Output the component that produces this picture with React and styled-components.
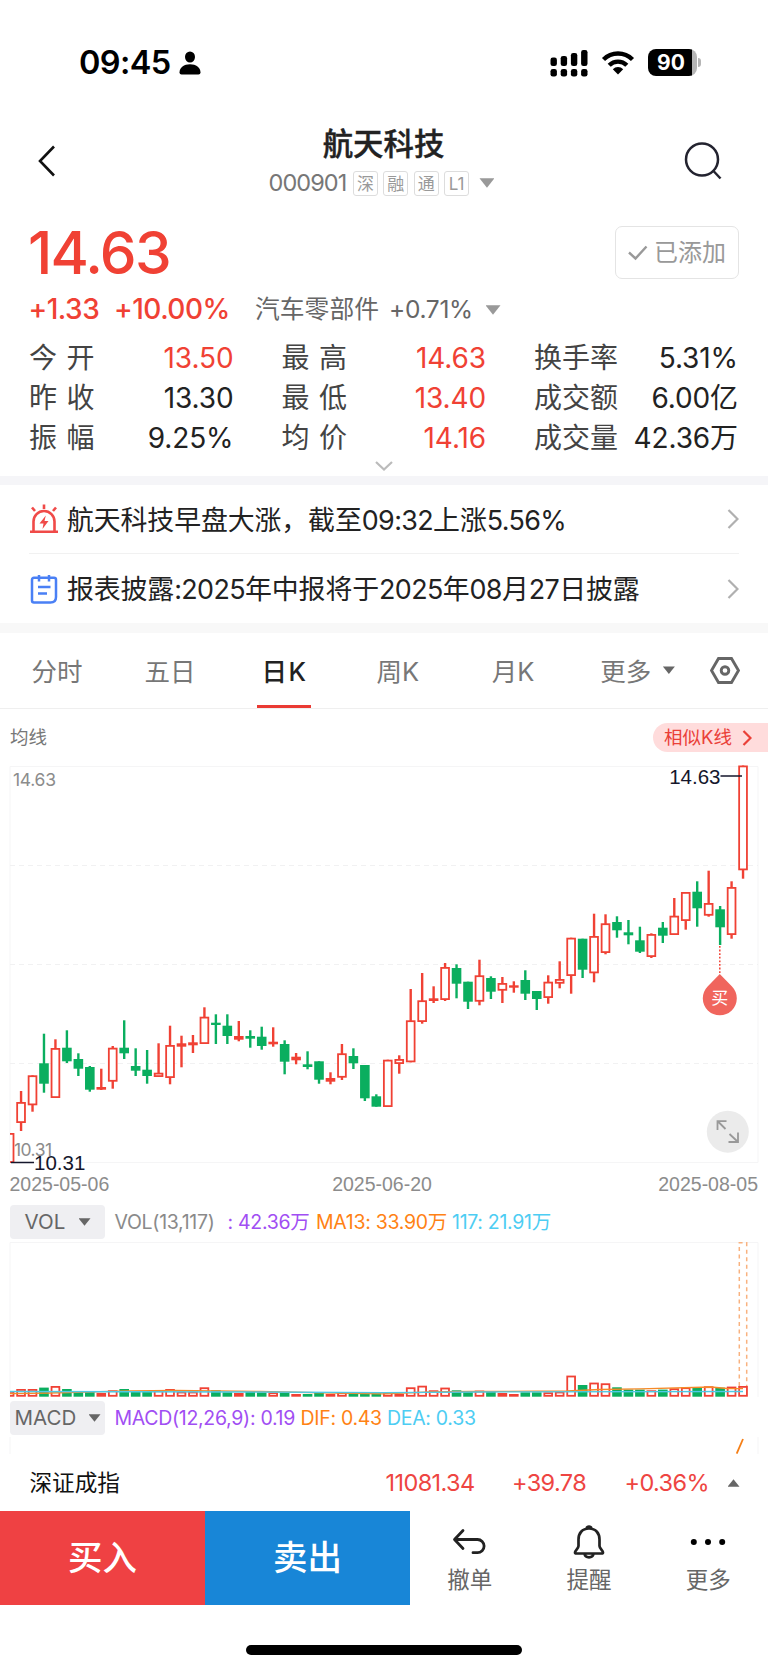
import React, { useState } from 'react'
import styled, { createGlobalStyle } from "styled-components";

const RED = "#f04134";
const GREEN = "#0aae5f";
const STEP = 11.46;
const FIRST = 9.6;

// [up, high, bodyTop, bodyBottom, low, volumeTop]
const candles = [
    [1, 1133, 1133, 1163, 1163, 1391], [1, 1091, 1102, 1123, 1131, 1389], [1, 1075.3, 1075.3, 1105.3, 1111.7, 1389],
    [0, 1033.7, 1063.3, 1083.7, 1092.7, 1387.6], [1, 1039.3, 1048, 1098, 1098, 1386], [0, 1030.3, 1047.7, 1061.3, 1063, 1389],
    [0, 1053.3, 1059, 1068.7, 1076, 1392], [0, 1066, 1067, 1089.7, 1091.7, 1392], [1, 1068.7, 1087, 1089.7, 1090, 1393],
    [1, 1046, 1047.7, 1081.7, 1088.7, 1390.3], [0, 1020.3, 1047.7, 1053.3, 1059, 1389], [0, 1048.3, 1066, 1070.7, 1076, 1391.6],
    [0, 1050, 1069.7, 1076, 1083.7, 1391], [1, 1043.3, 1072.7, 1077, 1077, 1390.3], [1, 1025.7, 1045, 1078, 1084.3, 1389],
    [1, 1035.7, 1043.3, 1046.7, 1067.3, 1391.6], [1, 1035, 1042.3, 1045.3, 1053, 1391.6], [1, 1007.3, 1016.7, 1044, 1044, 1387.3],
    [0, 1014.3, 1022.7, 1025, 1044, 1390.3], [0, 1014.3, 1025.7, 1036, 1044, 1392.3], [1, 1021, 1036, 1039.7, 1041.3, 1393],
    [0, 1030.3, 1036, 1038.7, 1047.7, 1392], [0, 1026.7, 1036.7, 1046, 1049.7, 1392.3], [1, 1027.3, 1041.7, 1044.3, 1046.7, 1392.3],
    [0, 1040.3, 1044, 1061.7, 1074.3, 1392.3], [1, 1053, 1056.7, 1060.3, 1064.3, 1394], [0, 1051.3, 1064.3, 1067, 1069.3, 1394],
    [0, 1061.3, 1061.3, 1079.7, 1083.7, 1393], [1, 1072.3, 1078, 1081.7, 1084.3, 1394], [1, 1044, 1053.3, 1077.7, 1080, 1392.3],
    [0, 1048.3, 1056, 1063.3, 1069, 1394], [0, 1065, 1065, 1098.3, 1101, 1393.3], [0, 1094.3, 1096.3, 1106.7, 1106.7, 1393.3],
    [1, 1059.7, 1059.7, 1107, 1107, 1392.3], [1, 1055.3, 1059, 1064, 1073.7, 1394], [1, 989, 1020.3, 1062.3, 1062.3, 1387.3],
    [1, 973, 1000.3, 1022, 1023.7, 1385.7], [1, 986.3, 998.3, 1001, 1003, 1390.3], [1, 963, 967, 1000, 1001, 1387.6],
    [0, 964.3, 968, 983.7, 998.3, 1390.3], [0, 981.7, 981.7, 1001.7, 1009, 1391.6], [1, 959.7, 975.3, 1001.7, 1005.3, 1390.6],
    [0, 976.3, 978, 991.7, 999, 1391.6], [1, 977, 983, 990.7, 1003, 1393], [1, 981.3, 985.3, 987.7, 992.7, 1394],
    [0, 970.3, 980, 993.7, 1000, 1392.3], [0, 991, 991, 999, 1010, 1392.3], [1, 975.3, 981.7, 998, 1003.7, 1392.3],
    [1, 961.3, 979, 983.7, 988.3, 1391.6], [1, 937.7, 937.7, 976, 993.7, 1375.6], [0, 938.7, 938.7, 969.7, 978, 1385],
    [1, 913.7, 936, 973.3, 982.3, 1382.6], [1, 914.3, 923.3, 953, 954.3, 1383.3], [0, 916.3, 922, 930.3, 937.7, 1387.3],
    [0, 920, 932.3, 935.3, 944.3, 1389.6], [0, 926.7, 940.3, 951.7, 953, 1389.6], [1, 933.3, 934, 957, 958, 1390.3],
    [0, 922, 927.7, 935.7, 943, 1389.6], [1, 898, 915.7, 935, 935, 1388.3], [1, 892, 892, 921, 929.7, 1387.3],
    [0, 881.3, 891.7, 908.3, 926.7, 1387.6], [1, 870.7, 903, 915.7, 916.7, 1386.3], [0, 906, 909.3, 927.3, 945, 1387.6],
    [1, 881.3, 887, 935, 938.7, 1386.6], [1, 765.5, 765.5, 870.3, 878.7, 1386],
];

const stats = [
    { id: 1, name: "今 开", value: "13.50", red: true },
    { id: 2, name: "最 高", value: "14.63", red: true },
    { id: 3, name: "换手率", value: "5.31%" },
    { id: 4, name: "昨 收", value: "13.30" },
    { id: 5, name: "最 低", value: "13.40", red: true },
    { id: 6, name: "成交额", value: "6.00亿" },
    { id: 7, name: "振 幅", value: "9.25%" },
    { id: 8, name: "均 价", value: "14.16", red: true },
    { id: 9, name: "成交量", value: "42.36万" },
]

const tabs = [
    { id: 1, name: "分时", left: 31.5 },
    { id: 2, name: "五日", left: 62 },
    { id: 3, name: "日K", left: 66 },
    { id: 4, name: "周K", left: 69 },
    { id: 5, name: "月K", left: 72.5 },
]

const Body = ({ x, up, top, bottom }) => {
    const h = bottom - top
    if (!up || h < 4) {
        return <rect x={x - 4.8} y={top} width="9.6" height={Math.max(h, 2)} fill={up ? RED : GREEN} />
    }
    return <rect x={x - 3.9} y={top + 0.9} width="7.8" height={h - 1.8} fill="#fff" stroke={RED} strokeWidth="1.8" />
}

const KLine = () => (
    <svg width="768" height="442" viewBox="0 760 768 442">
        <g stroke="#f5f5f6" strokeWidth="1" fill="none">
            <path d="M10 1162.5V766.5H758V1162.5Z" />
            <path d="M10 865.5H758M10 964.5H758M10 1063.5H758" stroke="#f1f1f2" strokeDasharray="5 4" />
        </g>
        <clipPath id="plot"><rect x="10" y="760" width="750" height="410" /></clipPath>
        <g clipPath="url(#plot)">
            {candles.map(([up, high, top, bottom, low], i) => {
                const x = FIRST + i * STEP
                return (
                    <g key={i}>
                        <path d={`M${x} ${high}V${low}`} stroke={up ? RED : GREEN} strokeWidth="2.4" />
                        <Body x={x} up={up} top={top} bottom={bottom} />
                    </g>
                )
            })}
        </g>
        <path d="M11 1162.5H34M720.5 776H742" stroke="#15172c" strokeWidth="1.6" />
        <ChartText x="13" y="786" $ui textLength="43">14.63</ChartText>
        <ChartText x="14" y="1155.5" $ui textLength="38">10.31</ChartText>
        <ChartText x="34" y="1170" $dark>10.31</ChartText>
        <ChartText x="720.5" y="783.5" $dark textAnchor="end">14.63</ChartText>
        <ChartText x="9.5" y="1191">2025-05-06</ChartText>
        <ChartText x="382" y="1191" textAnchor="middle">2025-06-20</ChartText>
        <ChartText x="758" y="1191" textAnchor="end">2025-08-05</ChartText>
        <path d="M719.8 946V974" stroke={RED} strokeWidth="1.5" strokeDasharray="1.8 1.8" />
        <path d="M719.8 974L732 986.5A17 17 0 1 1 707.6 986.5Z" fill="#f0655d" />
        <text x="719.8" y="1004" fontSize="17" fill="#fff" textAnchor="middle">买</text>
        <circle cx="727.8" cy="1131.7" r="21" fill="#ebebeb" />
        <path d="M725.5 1129L717.5 1121M717.5 1130V1121.2H726.5M729.5 1134L738 1142M738 1132.5V1142H728.5" stroke="#999" strokeWidth="1.8" fill="none" />
    </svg>
)

const Volume = () => (
    <svg width="768" height="162" viewBox="0 1239 768 162">
        <path d="M10 1397V1242.5H758V1397" stroke="#f5f5f6" fill="none" />
        <clipPath id="vol"><rect x="10" y="1239" width="750" height="162" /></clipPath>
        <g clipPath="url(#vol)">
            {candles.map((c, i) => (
                <Body key={i} x={FIRST + i * STEP} up={c[0]} top={c[5]} bottom={1396.7} />
            ))}
        </g>
        <path d="M10 1393.7L50 1393L130 1390.8L175 1390.5L260 1391.5L350 1393.4L384 1393.8L430 1392L470 1391.5L567 1391L600 1389.5L640 1388.8L711 1387L727 1388.5L743 1388.7" stroke="#f58a28" strokeWidth="1.3" fill="none" />
        <path d="M10 1391.5L250 1392L384 1392.6L480 1392L743 1391.5" stroke="#4fc9e6" strokeWidth="1.3" fill="none" />
        <path d="M739.3 1386V1242.8H746.7V1386" stroke="#f9b27f" strokeWidth="1.5" strokeDasharray="4 3.5" fill="none" />
    </svg>
)

const App = () => {
    const [active, setActive] = useState(3);

    return (
        <Page>
            <Global />
            <StatusBar>
                <Time>09:45</Time>
                <svg width="22" height="24" viewBox="0 0 22 24">
                    <ellipse cx="11" cy="6" rx="5" ry="5.6" />
                    <path d="M.5 21.5C.5 16.5 5 13.3 11 13.3S21.5 16.5 21.5 21.5Q21.5 23.6 19.5 23.6H2.5Q.5 23.6 .5 21.5Z" />
                </svg>
                <Signals>
                    <svg width="38" height="28" viewBox="0 0 38 28">
                        {[0, 1, 2, 3].map((i) => (
                            <g key={i}>
                                <rect x={0.5 + i * 10.2} y={[8.5, 7, 4, 1][i]} width="6.4" height={[8.5, 10, 13, 16][i]} rx="2.3" />
                                <rect x={0.5 + i * 10.2} y="20" width="6.4" height="7.5" rx="2.3" />
                            </g>
                        ))}
                    </svg>
                    <svg width="34" height="25" viewBox="0 0 34 25">
                        <g fill="none" stroke="#000" strokeWidth="4.4">
                            <path d="M2.5 9.5A20.5 20.5 0 0 1 31.5 9.5" />
                            <path d="M8.2 15.2A12.5 12.5 0 0 1 25.8 15.2" />
                        </g>
                        <path d="M17 24.5L11.8 19.2A7.4 7.4 0 0 1 22.2 19.2Z" />
                    </svg>
                    <Battery><b>90</b></Battery>
                </Signals>
            </StatusBar>

            <Header>
                <svg width="20" height="32" viewBox="0 0 20 32" fill="none" stroke="#111" strokeWidth="2.6">
                    <path d="M17 1.5L3 16L17 30.5" />
                </svg>
                <Title>
                    <h1>航天科技</h1>
                    <Code>
                        <span>000901</span>
                        {["深", "融", "通", "L1"].map((t) => <Badge key={t}>{t}</Badge>)}
                        <Caret $size={15} />
                    </Code>
                </Title>
                <svg width="38" height="38" viewBox="0 0 38 38" fill="none" stroke="#23232f" strokeWidth="2.5">
                    <circle cx="18" cy="17.5" r="16" />
                    <path d="M29 28.5L36.5 36.5" />
                </svg>
            </Header>

            <Quote>
                <Price>14.63</Price>
                <Added>
                    <svg width="20" height="16" viewBox="0 0 20 16" fill="none" stroke="#999" strokeWidth="2.4">
                        <path d="M1 7.5L7.5 13.5L18.5 1.5" />
                    </svg>
                    <span>已添加</span>
                </Added>
            </Quote>
            <Change>
                <Diff $w={85.5}>+1.33</Diff>
                <Diff $w={141}>+10.00%</Diff>
                <Sector>汽车零部件</Sector>
                <SectorRate>+0.71%</SectorRate>
                <Caret $size={15} />
            </Change>
            <Stats>
                {
                    stats.map((item) => (
                        <Stat key={item.id} $red={item.red}>
                            <span>{item.name}</span>
                            <em>{item.value}</em>
                        </Stat>
                    ))
                }
            </Stats>
            <Expand>
                <svg width="18" height="10" viewBox="0 0 18 10" fill="none" stroke="#bbb" strokeWidth="2.2"><path d="M1 1L9 8.5L17 1" /></svg>
            </Expand>

            <Band $h={9} />
            <News $line>
                <svg width="30" height="30" viewBox="0 0 30 30" fill="none" stroke="#f04a48" strokeWidth="2.6">
                    <path d="M1 27.8H29M4.5 27V17.5A10.5 10.5 0 0 1 25.5 17.5V27M15 .5V5M3 3.5L6 7M27 3.5L24 7" />
                    <path d="M16.8 11.5L10.5 19.5H14.5L13.5 25L19.5 17H15.5Z" fill="#f04a48" stroke="none" />
                </svg>
                <p>航天科技早盘大涨，截至<Num>09:32</Num>上涨<Num>5.56%</Num></p>
                <Arrow />
            </News>
            <News>
                <svg width="30" height="30" viewBox="0 0 30 30" fill="none" stroke="#4a80f5" strokeWidth="2.5">
                    <path d="M5 3.8H25Q27 3.8 27 5.8V23Q27 28.5 21.5 28.5H5Q3 28.5 3 26.5V5.8Q3 3.8 5 3.8ZM10 1V7.5M20 1V7.5M9 13H21.5M9 19.5H18" />
                </svg>
                <p>报表披露<Num>:2025</Num>年中报将于<Num>2025</Num>年<Num>08</Num>月<Num>27</Num>日披露</p>
                <Arrow />
            </News>
            <Band $h={9.5} $soft />

            <Tabs>
                {
                    tabs.map((item) => (
                        <Tab key={item.id} $left={item.left} $on={item.id === active} onClick={() => setActive(item.id)}>
                            {item.name}
                        </Tab>
                    ))
                }
                <Tab $left={66}>更多</Tab>
                <Caret $size={12} $dark />
                <svg width="30" height="27" viewBox="0 0 30 27" fill="none" stroke="#666" strokeWidth="2.9">
                    <path d="M8.5 1.5H21.5L28.5 13.5L21.5 25.5H8.5L1.5 13.5Z" />
                    <circle cx="15" cy="13.5" r="3.8" />
                </svg>
            </Tabs>

            <ChartHead>
                <span>均线</span>
                <Similar>
                    相似K线
                    <svg width="10" height="16" viewBox="0 0 10 16" fill="none" stroke="#ea4038" strokeWidth="2.2"><path d="M1.5 1L8.5 8L1.5 15" /></svg>
                </Similar>
            </ChartHead>
            <KLine />

            <Indicator $top={2.5}>
                <Picker $pad={14.5}>VOL<Caret $size={12} $dark /></Picker>
                <Legend $w={113} $c="#8a8a8a">VOL(13,117)</Legend>
                <Legend $w={88.5} $c="#a14ef3">: 42.36万</Legend>
                <Legend $w={136} $c="#ff8214">MA13: 33.90万</Legend>
                <Legend $c="#4dcdf3">117: 21.91万</Legend>
            </Indicator>
            <Volume />
            <Indicator>
                <Picker $pad={4.5}>MACD<Caret $size={12} $dark /></Picker>
                <Legend $w={186} $c="#a14ef3">MACD(12,26,9): 0.19</Legend>
                <Legend $w={86.5} $c="#ff8214">DIF: 0.43</Legend>
                <Legend $c="#4dcdf3">DEA: 0.33</Legend>
            </Indicator>
            <svg width="768" height="20" viewBox="0 1435 768 20">
                <path d="M10 1437V1454M758 1437V1454" stroke="#f5f5f6" />
                <path d="M736.7 1453.7L743 1439" stroke="#f57f17" strokeWidth="1.8" />
            </svg>

            <IndexRow>
                <span>深证成指</span>
                <IndexNum $w={126.5}>11081.34</IndexNum>
                <IndexNum $w={112.5}>+39.78</IndexNum>
                <IndexNum $w={103}>+0.36%</IndexNum>
                <Caret $size={12} $dark $up />
            </IndexRow>

            <Actions>
                <Trade $c="#ef4143">买入</Trade>
                <Trade $c="#1886d7">卖出</Trade>
                <Tool>
                    <svg width="36" height="36" viewBox="0 0 36 36" fill="none" stroke="#222" strokeWidth="2.8" strokeLinecap="round" strokeLinejoin="round">
                        <path d="M11 6.5L2.5 15.5L11 24.5M3.5 15.5H25.5A6.6 6.6 0 0 1 25.5 28.7H21" />
                    </svg>
                    撤单
                </Tool>
                <Tool>
                    <svg width="36" height="36" viewBox="0 0 36 36" fill="none" stroke="#222" strokeWidth="2.7" strokeLinejoin="round">
                        <path d="M18 4.5C11 4.5 7.5 9.5 7.5 15.5V22C7.5 24.5 4 26.5 4 28.5Q4 29.5 5.5 29.5H30.5Q32 29.5 32 28.5C32 26.5 28.5 24.5 28.5 22V15.5C28.5 9.5 25 4.5 18 4.5ZM15.5 4.5A2.6 2.6 0 0 1 20.5 4.5M13.5 30A4.6 4.2 0 0 0 22.5 30" />
                    </svg>
                    提醒
                </Tool>
                <Tool>
                    <svg width="36" height="36" viewBox="0 0 36 36">
                        <circle cx="3.8" cy="18" r="3" /><circle cx="18" cy="18" r="3" /><circle cx="32.2" cy="18" r="3" />
                    </svg>
                    更多
                </Tool>
            </Actions>
            <Home />
        </Page>
    )
}

export default App


const Arrow = () => (
    <svg width="12" height="20" viewBox="0 0 12 20" fill="none" stroke="#b0b0b0" strokeWidth="2.2"><path d="M1.5 1L10.5 10L1.5 19" /></svg>
)

const Global = createGlobalStyle`
    *{
        box-sizing: border-box;
    }
    body{
        margin: 0;
        background: #fff;
    }
    h1, p{
        margin: 0;
    }
    svg{
        display: block;
        flex: none;
    }
`

const Page = styled.div`
    width: 768px;
    height: 1670px;
    overflow: hidden;
    display: flex;
    flex-direction: column;
    background: #fff;
    color: #222;
    font-family: Inter, "Noto Sans CJK SC", sans-serif;
    line-height: 1.2;
    white-space: nowrap;
    > *{
        flex: none;
    }
`

const StatusBar = styled.div`
    height: 125px;
    padding: 0 71px 0 79px;
    display: flex;
    align-items: center;
`

const Time = styled.div`
    width: 100px;
    font-size: 32.5px;
    font-weight: 600;
    letter-spacing: -0.6px;
    color: #000;
`

const Signals = styled.div`
    margin-left: auto;
    display: flex;
    align-items: center;
    gap: 13px;
`

const Battery = styled.div`
    position: relative;
    width: 49px;
    height: 27px;
    border-radius: 8px;
    background: linear-gradient(90deg, #000 44px, #b5b5b5 44px);
    color: #fff;
    font-size: 21px;
    line-height: 27px;
    text-align: center;
    padding-right: 3px;
    &::after{
        content: "";
        position: absolute;
        right: -4px;
        top: 9px;
        width: 3px;
        height: 9px;
        border-radius: 0 3px 3px 0;
        background: #b5b5b5;
    }
`

const Header = styled.div`
    height: 90px;
    padding: 0 46px 0 37px;
    display: flex;
    justify-content: space-between;
    > svg{
        margin-top: 19.5px;
    }
    > svg:last-child{
        margin-top: 16.5px;
    }
`

const Title = styled.div`
    margin-left: 13px;
    display: flex;
    flex-direction: column;
    align-items: center;
    h1{
        height: 37px;
        line-height: 38px;
        font-size: 30.4px;
        font-weight: 500;
        -webkit-text-stroke: 0.4px #222;
        margin-left: 13px;
    }
`

const Code = styled.div`
    margin: 8px 0 0 9px;
    display: flex;
    align-items: center;
    gap: 5.4px;
    color: #777;
    font-size: 23.5px;
    line-height: 26px;
    > span{
        width: 79px;
        letter-spacing: -0.95px;
    }
`

const Badge = styled.i`
    width: 25px;
    height: 25px;
    border: 1.5px solid #ddd;
    border-radius: 3px;
    font-style: normal;
    font-size: 17px;
    line-height: 24px;
    text-align: center;
    color: #999;
    & + div{
        margin-left: 5px;
    }
`

const Caret = styled.div`
    flex: none;
    width: ${({ $size }) => $size}px;
    height: ${({ $size }) => $size * 0.64}px;
    background: ${({ $dark }) => ($dark ? "#666" : "#999")};
    clip-path: ${({ $up }) => ($up ? "polygon(50% 0, 100% 100%, 0 100%)" : "polygon(0 0, 100% 0, 50% 100%)")};
`

const Quote = styled.div`
    height: 75px;
    padding: 11px 29px 0 28px;
    display: flex;
    justify-content: space-between;
    align-items: flex-start;
`

const Price = styled.div`
    font-size: 58.5px;
    line-height: 54px;
    font-weight: 500;
    letter-spacing: -1.7px;
    color: ${RED};
`

const Added = styled.div`
    width: 124px;
    height: 53px;
    border: 1.5px solid #e4e4e4;
    border-radius: 7px;
    display: flex;
    align-items: center;
    justify-content: center;
    gap: 6px;
    font-size: 24px;
    color: #999;
    span{
        padding-top: 2px;
    }
`

const Change = styled.div`
    height: 39px;
    padding: 1px 0 0 28.5px;
    display: flex;
    align-items: center;
`

const Diff = styled.div`
    width: ${({ $w }) => $w}px;
    font-size: 28px;
    font-weight: 500;
    letter-spacing: -0.5px;
    color: ${RED};
`

const Sector = styled.div`
    width: 134px;
    font-size: 24.8px;
    color: #666;
`

const SectorRate = styled.div`
    width: 96.5px;
    font-size: 24.5px;
    letter-spacing: -0.3px;
    color: #666;
`

const Stats = styled.div`
    height: 120px;
    margin-top: 9px;
    padding: 0 30px 0 29px;
    display: grid;
    grid-template-columns: 204.5px 204.5px 204px;
    grid-template-rows: repeat(3, 40px);
    column-gap: 48px;
`

const Stat = styled.div`
    display: flex;
    align-items: center;
    justify-content: space-between;
    font-size: 28px;
    line-height: 40px;
    span{
        color: #444;
        word-spacing: 1.5px;
    }
    em{
        font-style: normal;
        letter-spacing: -0.1px;
        color: ${({ $red }) => ($red ? RED : "#222")};
    }
`

const Expand = styled.div`
    height: 18px;
    padding-top: 3px;
    display: flex;
    justify-content: center;
`

const Band = styled.div`
    height: ${({ $h }) => $h}px;
    background: ${({ $soft }) => ($soft ? "#f8f8f8" : "#f5f5f8")};
`

const News = styled.div`
    height: 69px;
    margin: 0 29px;
    display: flex;
    align-items: center;
    border-bottom: ${({ $line }) => ($line ? "1.5px solid #f1f1f1" : "none")};
    p{
        flex: 1;
        padding-top: 2px;
        margin-left: 8px;
        font-size: 26.9px;
        letter-spacing: -0.1px;
    }
`

const Num = styled.span`
    letter-spacing: -0.6px;
`

const Tabs = styled.div`
    height: 76.5px;
    border-bottom: 1.5px solid #efefef;
    display: flex;
    align-items: center;
    > svg{
        margin-left: 35.5px;
    }
`

const Tab = styled.button`
    position: relative;
    height: 76px;
    margin-left: ${({ $left }) => $left}px;
    padding: 3px 0 0;
    border: 0;
    background: none;
    font-family: inherit;
    font-size: 25.5px;
    line-height: 30px;
    font-weight: ${({ $on }) => ($on ? 500 : 400)};
    letter-spacing: ${({ $on }) => ($on ? 1.5 : 0)}px;
    color: ${({ $on }) => ($on ? "#222" : "#777")};
    cursor: pointer;
    & + div{
        margin-left: 11.5px;
    }
    &::after{
        content: "";
        display: ${({ $on }) => ($on ? "block" : "none")};
        position: absolute;
        left: 50%;
        bottom: 0;
        width: 54px;
        height: 3.5px;
        margin-left: -27.5px;
        background: #ea3a33;
    }
`

const ChartHead = styled.div`
    height: 51px;
    padding: 14px 0 0 10px;
    display: flex;
    justify-content: space-between;
    align-items: flex-start;
    font-size: 18.5px;
    line-height: 29px;
    color: #777;
`

const Similar = styled.div`
    width: 115px;
    height: 29px;
    padding-left: 11px;
    display: flex;
    align-items: center;
    gap: 10px;
    border-radius: 15px 0 0 15px;
    background: #ffdcdc;
    color: #ea4038;
`

const ChartText = styled.text`
    font-family: ${({ $ui }) => ($ui ? "Inter" : '"Liberation Sans"')}, sans-serif;
    font-size: ${({ $ui, $dark }) => ($ui ? 17.5 : $dark ? 20.5 : 19.5)}px;
    fill: ${({ $dark }) => ($dark ? "#15172c" : "#8c8c8c")};
`

const Indicator = styled.div`
    height: ${({ $top }) => 34 + ($top || 0)}px;
    padding: ${({ $top }) => $top || 0}px 0 0 10px;
    display: flex;
    align-items: center;
`

const Picker = styled.div`
    width: 95px;
    height: 34px;
    margin-right: 9.5px;
    padding: 1px ${({ $pad }) => $pad}px 0;
    display: flex;
    align-items: center;
    justify-content: space-between;
    border-radius: 4px;
    background: #efeff2;
    font-size: 20.5px;
    color: #666;
`

const Legend = styled.div`
    width: ${({ $w }) => ($w ? $w + "px" : "auto")};
    padding-top: 2px;
    font-size: 19.5px;
    letter-spacing: -0.3px;
    color: ${({ $c }) => $c};
`

const IndexRow = styled.div`
    height: 56px;
    padding: 1px 0 0 29.5px;
    display: flex;
    align-items: center;
    color: #111;
    > span{
        width: 356px;
        font-size: 22.6px;
    }
`

const IndexNum = styled.div`
    width: ${({ $w }) => $w}px;
    font-size: 23.5px;
    letter-spacing: -0.6px;
    color: #ee4542;
`

const Actions = styled.div`
    height: 94px;
    display: flex;
`

const Trade = styled.div`
    width: 205px;
    padding-top: 1px;
    display: flex;
    align-items: center;
    justify-content: center;
    background: ${({ $c }) => $c};
    color: #fff;
    font-size: 34.5px;
    font-weight: 500;
`

const Tool = styled.div`
    flex: 1;
    padding-top: 13px;
    display: flex;
    flex-direction: column;
    align-items: center;
    font-size: 22.5px;
    line-height: 40px;
    color: #666;
`

const Home = styled.div`
    width: 276px;
    height: 10px;
    margin: 40px auto 0;
    border-radius: 5px;
    background: #000;
`
